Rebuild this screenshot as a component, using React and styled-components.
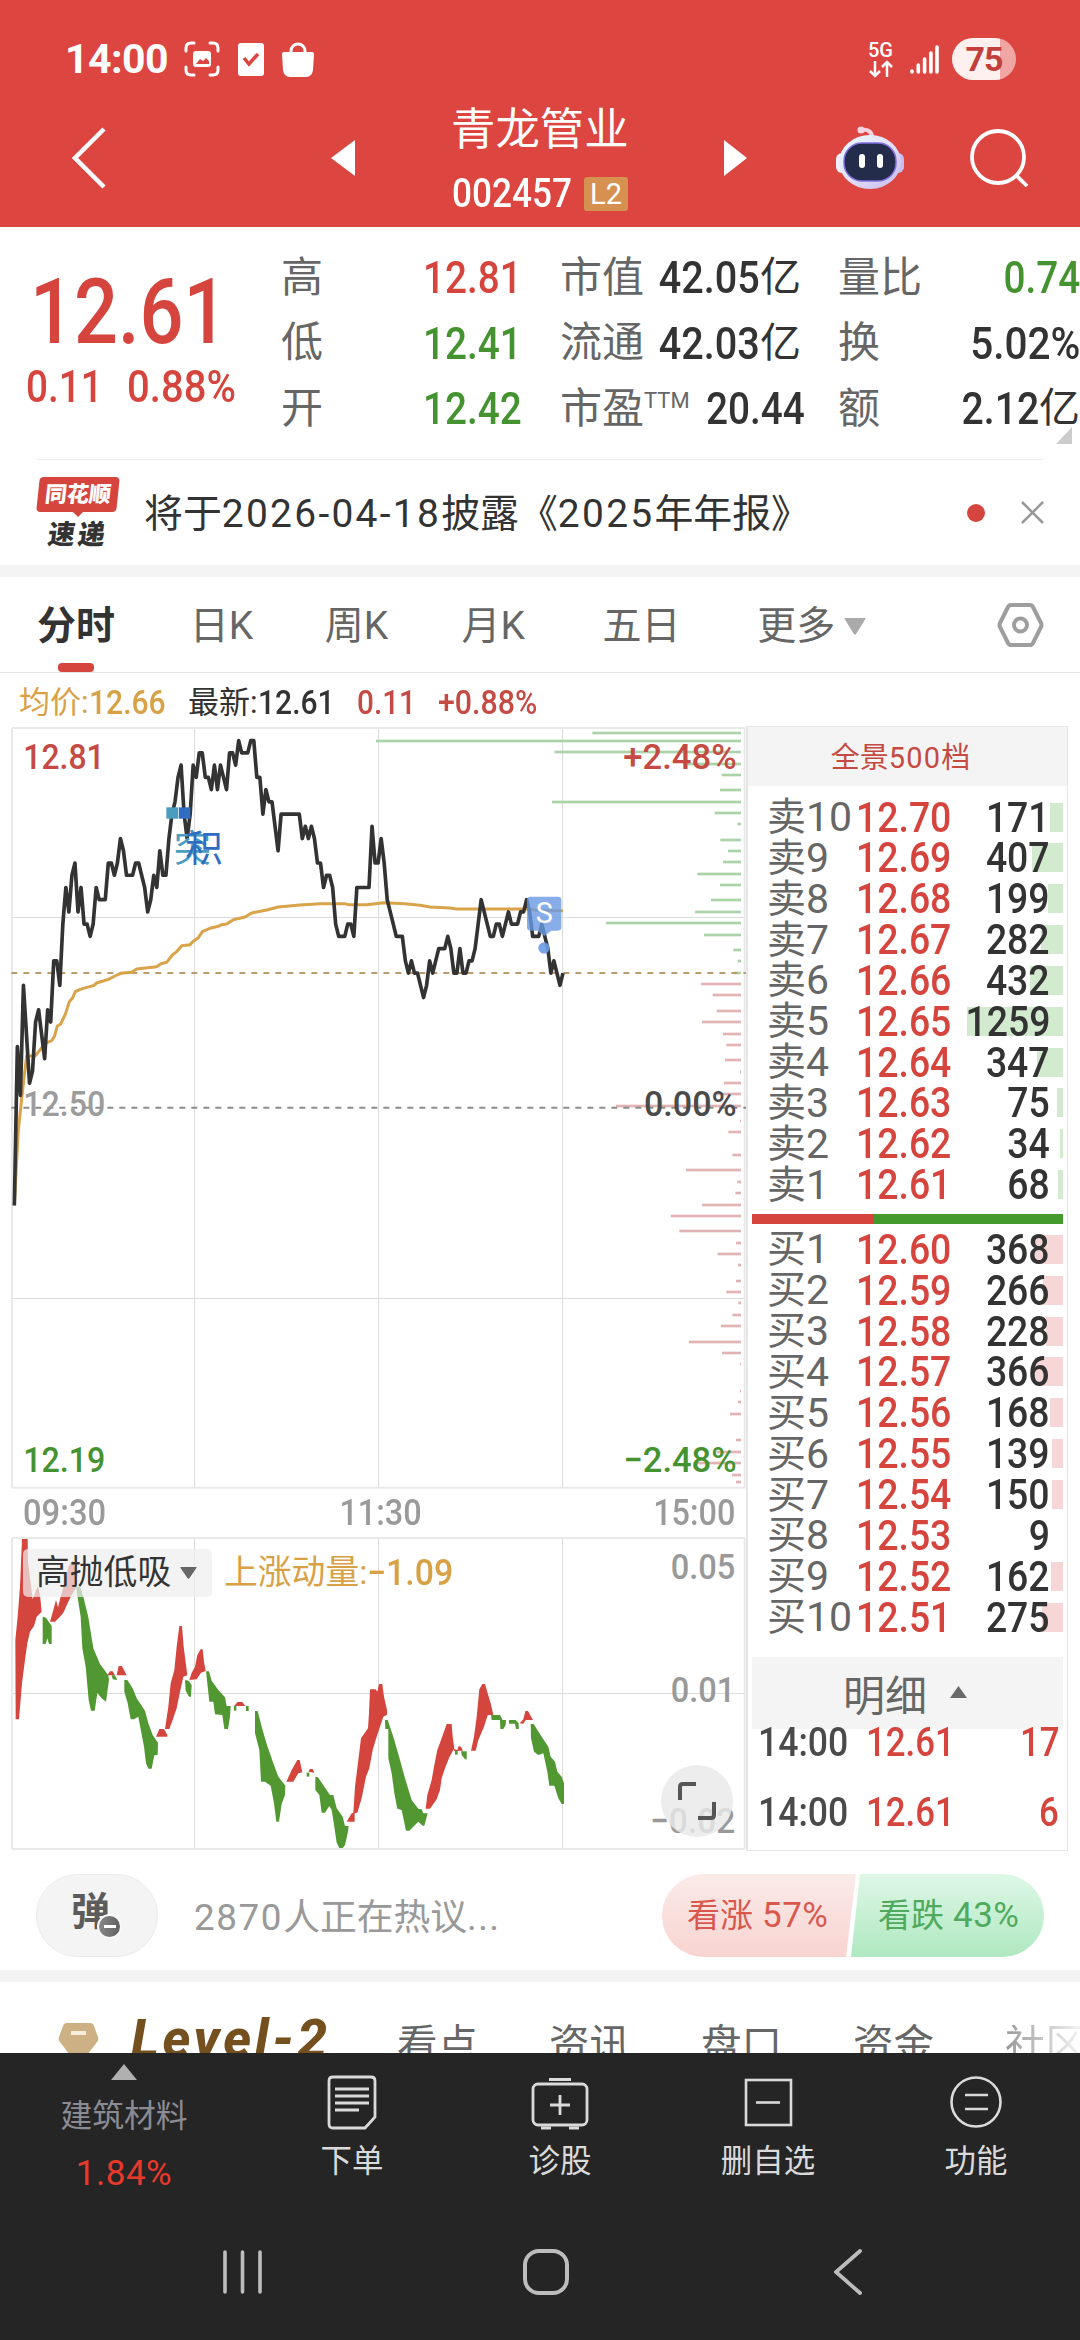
import React from 'react';
import styled, { createGlobalStyle } from 'styled-components';

const red = '#d5453e';
const green = '#459330';
const gold = '#d9a146';
const dark = '#333333';
const grey = '#666666';

const Global = createGlobalStyle`
* {
    box-sizing: border-box;
}
body {
    margin: 0;
    background: #ffffff;
    font-family: Roboto, 'Noto Sans CJK SC', sans-serif;
    line-height: 1;
    color: #333333;
}
svg {
    display: block;
    flex: none;
}
`;
const Screen = styled.div`
width: 1080px;
height: 2340px;
overflow: hidden;
display: flex;
flex-direction: column;
white-space: nowrap;
`;
/* narrow digits, close to the DIN face used for prices */
const Num = styled.span`
display: inline-block;
font-weight: 500;
font-size: ${p => p.$size || 42}px;
color: ${p => p.$color || dark};
transform: scaleX(${p => p.$k || 0.87});
transform-origin: ${p => p.$from || 'left'} center;
`;
const Head = styled.header`
height: 227px;
background: #dd4540;
color: #ffffff;
`;
const StatusBar = styled.div`
height: 98px;
padding: 20px 64px 0 65px;
display: flex;
align-items: center;
`;
const Clock = styled.div`
width: 119px;
font-size: 41px;
font-weight: 700;
letter-spacing: -0.5px;
`;
const StatusIcons = styled.div`
display: flex;
align-items: center;
gap: 18px;
flex: 1;
`;
const Network = styled.div`
width: 27px;
margin-right: 16px;
display: flex;
flex-direction: column;
align-items: center;
font-size: 20px;
font-weight: 500;
`;
const Battery = styled.div`
width: 64px;
height: 42px;
margin-left: 13px;
border-radius: 21px;
background: linear-gradient(90deg, #fdf0ef 48px, #f0a6a3 48px);
color: #c2403b;
font-size: 34px;
font-weight: 700;
display: flex;
align-items: center;
justify-content: center;
letter-spacing: -1px;
`;
const TitleBar = styled.div`
height: 120px;
padding-left: 72px;
display: flex;
align-items: center;
`;
const Title = styled.div`
width: 177px;
margin: 0 96px;
padding-top: 3px;
display: flex;
flex-direction: column;
gap: 25px;
`;
const StockName = styled.div`
font-size: 44.4px;
`;
const Code = styled.div`
display: flex;
align-items: center;
justify-content: space-between;
height: 34px;
`;
const CodeNum = styled.div`
width: 120px;
padding-left: 1px;
`;
const Badge = styled.div`
width: 44px;
height: 34px;
border-radius: 3px;
background: #d6904f;
font-size: 29px;
display: flex;
align-items: center;
justify-content: center;
`;
const Space = styled.div`
width: ${p => p.$w}px;
flex: none;
`;
const Quote = styled.section`
height: 232px;
padding-top: 18px;
display: grid;
grid-template-columns: 281px 241px 38px 241px 37px 242px;
position: relative;
`;
const Price = styled.div`
padding: 23px 0 0 26px;
`;
const Big = styled.div`
padding-left: 4px;
height: 96px;
`;
const Change = styled.div`
display: flex;
`;
const ChangeItem = styled.div`
width: 101px;
`;
const Facts = styled.div`
display: flex;
flex-direction: column;
`;
const Fact = styled.div`
height: 65.5px;
display: flex;
align-items: center;
justify-content: space-between;
font-size: 42px;
color: ${grey};
`;
const Sup = styled.sup`
font-size: 22px;
line-height: 1;
vertical-align: 15px;
`;
const Value = styled.span`
color: ${p => p.$color || dark};
display: flex;
align-items: center;
font-size: 41px;
`;
const Corner = styled.div`
position: absolute;
right: 8px;
bottom: 15px;
border-left: 16px solid transparent;
border-bottom: 17px solid #cccccc;
`;
const News = styled.section`
height: 106px;
margin: 0 36px;
border-top: 1px solid #ececec;
display: flex;
align-items: center;
`;
const Brand = styled.div`
width: 84px;
margin-right: 24px;
display: flex;
flex-direction: column;
align-items: center;
font-weight: 900;
`;
const BrandTop = styled.div`
width: 80px;
height: 35px;
border-radius: 4px;
background: ${red};
color: #ffffff;
font-size: 22px;
transform: skewX(-6deg);
display: flex;
align-items: center;
justify-content: center;
`;
const BrandTail = styled.div`
border: 5px solid transparent;
border-top-color: ${red};
height: 6px;
`;
const BrandBottom = styled.div`
font-size: 27px;
letter-spacing: 3px;
transform: skewX(-8deg);
`;
const NewsText = styled.div`
flex: 1;
padding-top: 3px;
font-size: 38.9px;
`;
const Wide = styled.span`
letter-spacing: ${p => p.$s}px;
`;
const Dot = styled.div`
width: 18px;
height: 18px;
border-radius: 50%;
background: ${red};
margin-right: 36px;
`;
const Band = styled.div`
height: 12px;
background: #f4f4f4;
`;
const Tabs = styled.nav`
height: 96px;
border-bottom: 1px solid #e4e4e4;
padding: 0 36px 0 37px;
display: flex;
align-items: center;
`;
const Tab = styled.div`
width: ${p => p.$w}px;
height: 95px;
padding-top: 4px;
display: flex;
align-items: center;
font-size: 39px;
font-weight: ${p => (p.$on ? 600 : 400)};
color: ${p => (p.$on ? dark : grey)};
position: relative;
&::after {
    content: '';
    display: ${p => (p.$on ? 'block' : 'none')};
    position: absolute;
    left: 21px;
    bottom: 0;
    width: 36px;
    height: 9px;
    border-radius: 4px;
    background: ${red};
}
`;
const More = styled.div`
width: 240px;
padding-top: 3px;
display: flex;
align-items: center;
gap: 9px;
font-size: 39px;
color: ${grey};
`;
const Summary = styled.div`
height: 53px;
padding: 6px 0 0 19px;
display: flex;
align-items: center;
font-size: 31px;
`;
const SummaryItem = styled.div`
width: ${p => p.$w}px;
color: ${p => p.$color};
display: flex;
align-items: center;
`;
const Main = styled.main`
height: 1124px;
display: flex;
`;
const Charts = styled.div`
width: 746px;
display: flex;
flex-direction: column;
`;
const Times = styled.div`
height: 48px;
padding: 0 11px 0 23px;
display: flex;
align-items: center;
justify-content: space-between;
`;
const SubChart = styled.div`
position: relative;
height: 313px;
`;
const Legend = styled.div`
position: absolute;
left: 23px;
top: 12px;
height: 48px;
display: flex;
align-items: center;
font-size: 33.8px;
color: ${gold};
`;
const Picker = styled.div`
width: 189px;
height: 48px;
margin-right: 12px;
padding-left: 13px;
border-radius: 5px;
background: rgba(238, 238, 238, 0.72);
color: ${dark};
display: flex;
align-items: center;
gap: 9px;
`;
const Expand = styled.div`
position: absolute;
left: 661px;
top: 228px;
width: 72px;
height: 72px;
border-radius: 50%;
background: rgba(233, 233, 233, 0.82);
display: flex;
align-items: center;
justify-content: center;
`;
const Book = styled.div`
width: 322px;
height: 1125px;
border: 1px solid #e6e6e6;
border-left-width: 2px;
`;
const BookHead = styled.div`
height: 59px;
margin-bottom: 10.5px;
padding: 3px 14px 0 0;
background: #f4f4f4;
color: #c44a42;
font-size: 29px;
display: flex;
align-items: center;
justify-content: center;
`;
const Level = styled.div`
height: 40.85px;
padding: 0 17px 0 19px;
display: grid;
grid-template-columns: 89px 80px 1fr;
align-items: center;
position: relative;
font-size: 39px;
color: ${grey};
`;
const LevelTag = styled.span`
display: flex;
align-items: center;
`;
const Digits = styled.span`
font-size: 41px;
`;
const Bar = styled.div`
position: absolute;
right: 4px;
top: 6px;
height: 29px;
background: ${p => (p.$sell ? '#d2ebcf' : '#f6d6d6')};
`;
const Over = styled.span`
position: relative;
text-align: right;
`;
const Ratio = styled.div`
height: 10px;
margin: 9px 4px 5px;
background: linear-gradient(90deg, ${red} 122px, #459a2c 122px);
`;
const DetailHead = styled.div`
height: 72px;
margin: 20px 4px 0;
padding: 8px 5px 0 0;
background: #f4f4f4;
color: ${grey};
font-size: 42px;
display: flex;
align-items: center;
justify-content: center;
gap: 23px;
svg {
    margin-bottom: 11px;
}
`;
const Tick = styled.div`
height: 30px;
margin-bottom: 40px;
padding: 0 8px 0 10px;
display: grid;
grid-template-columns: 108px 1fr auto;
align-items: center;
position: relative;
top: -6px;
`;
const Talk = styled.section`
height: 120px;
padding: 11px 36px 0;
display: flex;
align-items: center;
`;
const Bullet = styled.div`
width: 122px;
height: 83px;
border: 1px solid #ebebeb;
border-radius: 42px;
background: #f4f4f4;
color: #5c5c5c;
font-size: 39px;
font-weight: 700;
padding: 18px 0 0 34px;
position: relative;
`;
const BulletBadge = styled.div`
position: absolute;
left: 60px;
top: 39px;
width: 25px;
height: 25px;
border: 2px solid #f8f8f8;
border-radius: 50%;
background: linear-gradient(90deg, #888888, #5f5f5f);
display: flex;
align-items: center;
justify-content: center;
&::after {
    content: '';
    width: 12px;
    height: 3px;
    background: #ffffff;
}
`;
const TalkText = styled.div`
flex: 1;
padding: 5px 0 0 36px;
font-size: 36.8px;
color: #999999;
`;
const Votes = styled.div`
width: 382px;
height: 83px;
border-radius: 42px;
overflow: hidden;
display: flex;
`;
const Vote = styled.div`
width: ${p => (p.$up ? 194 : 193)}px;
height: 83px;
padding-left: ${p => (p.$up ? 25 : 27)}px;
margin-right: ${p => (p.$up ? -5 : 0)}px;
display: flex;
align-items: center;
gap: 9px;
font-size: 33px;
color: ${p => (p.$up ? '#d9584e' : '#4faa5e')};
background: ${p => (p.$up ? 'linear-gradient(#faebe9, #f8d4d0)' : 'linear-gradient(#def7e7, #afe8c0)')};
clip-path: ${p => (p.$up ? 'polygon(0 0, 100% 0, 184px 100%, 0 100%)' : 'polygon(9px 0, 100% 0, 100% 100%, 0 100%)')};
span {
    font-size: 35px;
    letter-spacing: 0.5px;
}
`;
const LevelBar = styled.section`
height: 71px;
padding-left: 58px;
overflow: hidden;
display: flex;
align-items: flex-start;
`;
const LevelLogo = styled.div`
width: 266px;
flex: none;
margin: 31px 0 0 32px;
font-size: 53px;
font-style: italic;
font-weight: 800;
letter-spacing: 3.6px;
color: #74501f;
`;
const LevelTab = styled.div`
width: 152px;
margin-top: 43px;
flex: none;
font-size: 40.5px;
color: ${grey};
${p => p.$fade && `
    width: 90px;
    background: linear-gradient(90deg, #999999, #f2f2f2 74px);
    background-clip: text;
    color: transparent;
`}
`;
const Bottom = styled.footer`
height: 287px;
background: #252525;
display: flex;
flex-direction: column;
`;
const Actions = styled.div`
height: 147px;
display: grid;
grid-template-columns: 248px repeat(4, 208px);
`;
const Industry = styled.div`
padding-top: 11px;
display: flex;
flex-direction: column;
align-items: center;
font-size: 31.8px;
color: #8b8b93;
`;
const Up = styled.div`
border: 13px solid transparent;
border-top: 0;
border-bottom: 16px solid #b0b0b0;
margin-bottom: 21px;
`;
const Pct = styled.div`
margin-top: 23px;
font-size: 35px;
color: #e8392b;
letter-spacing: 0.5px;
`;
const Action = styled.div`
padding-top: 18px;
display: flex;
flex-direction: column;
align-items: center;
gap: 15px;
font-size: 31.5px;
color: #dadada;
`;
const SystemNav = styled.div`
padding: 49px 218px 0 223px;
display: flex;
svg + svg {
    margin-left: 260px;
}
svg:last-child {
    margin-left: auto;
}
`;

/* one price per minute, in cents over 12.50 */
const prices = [
    -8, 5, 1, 10, 6, 2, 3, 7, 8, 6, 4, 8, 7, 12, 12, 10, 15, 18, 16, 19,
    20, 16, 18, 15, 15, 14, 15, 18, 17, 17, 17, 20, 20, 19, 20, 22, 21, 19, 19, 19,
    20, 20, 19, 18, 16, 17, 19, 18, 21, 19, 19, 22, 24, 25, 27, 28, 24, 22, 24, 28,
    27, 29, 29, 27, 27, 26, 28, 26, 28, 27, 26, 29, 29, 28, 30, 29, 29, 29, 30, 30,
    27, 27, 24, 26, 25, 25, 23, 21, 24, 24, 24, 24, 24, 24, 24, 22, 23, 22, 23, 22,
    20, 20, 18, 19, 19, 18, 15, 14, 14, 14, 15, 15, 14, 18, 18, 18, 18, 18, 23, 20,
    20, 22, 20, 17, 16, 15, 14, 14, 14, 12, 11, 12, 11, 11, 10, 9, 10, 12, 11, 12,
    13, 13, 13, 14, 13, 11, 11, 13, 11, 11, 12, 12, 13, 15, 17, 16, 15, 14, 14, 15,
    15, 14, 15, 16, 15, 15, 15, 16, 16, 17, 16, 14, 14, 14, 15, 14, 13, 11, 12, 11,
    10, 11,
];
const priceLine = prices.map((c, i) => `${(43 + i * 9.094).toFixed(1)},${(1163 - c * 36.7).toFixed(1)}`).join(' ');
const averageLine = '43,1456 55,1230 70,1090 80,1008 105,1008 120,990 135,970 155,962 163,950 172,918 182,912 197,880 208,845 217,835 226,815 240,808 282,796 290,789 325,778 345,768 362,760 395,757 410,747 470,740 483,731 500,727 517,705 530,695 545,677 570,674 582,662 595,653 608,634 630,625 655,619 665,614 680,612 700,599 735,591 755,579 800,570 835,561 900,555 960,551 1035,551 1045,554 1100,554 1152,548 1215,551 1260,556 1290,561 1350,564 1370,567 1590,567 1620,572 1689,572';

const greenBars = [[667, 39], [18, 63], [553, 96], [940, 132], [1055, 165], [1050, 210], [546, 246], [1034, 279], [1102, 312], [1051, 360], [1074, 393], [1059, 426], [982, 462], [1050, 495], [1023, 540], [975, 576], [708, 609], [1002, 645], [1090, 690], [1103, 723], [1092, 759]];
const redBars = [[993, 792], [1028, 825], [1040, 873], [996, 906], [1059, 942], [1069, 975], [1065, 1020], [1110, 1056], [1062, 1089], [1040, 1122], [738, 1158], [1110, 1203], [1075, 1236], [1087, 1305], [948, 1350], [1102, 1386], [1096, 1419], [996, 1455], [902, 1488], [928, 1533], [1098, 1569], [1043, 1602], [1104, 1635], [1098, 1683], [1069, 1716], [1105, 1749], [1087, 1785], [1053, 1818], [957, 1866], [1056, 1899], [1110, 1932], [1110, 2013], [1104, 2046], [1080, 2082], [1098, 2160], [1040, 2196], [982, 2229], [1086, 2265], [1098, 2286]];

const rises = [
    '66,57 83,57 84,125 98,238 113,198 120,225 125,275 110,290 102,318 90,335 82,370 75,420 66,490 57,598 47,598 46,360 53,290 60,200',
    '150,305 160,270 168,240 174,262 182,230 195,185 205,140 220,120 230,200 215,225 205,245 190,278 180,290 165,305',
    '322,466 330,454 338,454 345,466',
    '350,466 356,438 366,438 380,466',
    '468,650 478,627 492,627 502,645 502,650',
    '495,627 505,560 512,490 523,450 530,380 538,318 546,318 551,380 562,466 550,470 540,515 530,565 518,600 508,627',
    '568,480 575,458 585,440 592,405 602,388 608,388 612,425 617,453 603,458 590,478',
    '703,558 712,546 727,546 736,558',
    '859,785 875,750 892,720 899,720 907,757 895,760 880,785',
    '925,755 930,747 938,747 943,758',
    '1040,905 1055,880 1060,878 1065,800 1075,720 1083,655 1104,625 1107,580 1110,508 1127,508 1132,515 1137,492 1147,492 1152,530 1161,570 1161,584 1150,590 1130,650 1118,690 1108,745 1098,770 1085,835 1072,878 1064,880 1064,905',
    '1277,866 1282,825 1295,780 1302,740 1312,690 1325,655 1340,612 1355,612 1358,650 1363,685 1348,712 1335,745 1325,775 1320,810 1310,838 1290,866',
    '1360,686 1372,690 1376,678 1383,680 1389,692 1363,693',
    '1413,692 1422,650 1430,590 1438,508 1447,492 1455,492 1463,520 1472,550 1480,584 1463,586 1452,620 1435,660 1427,692',
    '1559,610 1570,598 1576,573 1584,573 1599,600 1577,600 1570,611',
];
const falls = [
    '128,290 138,293 155,318 155,372 147,372 142,355 137,372 128,372',
    '228,200 240,200 250,230 265,292 280,385 300,432 325,466 327,480 318,545 305,535 292,519 284,572 273,572 266,540 257,440 247,385 242,290',
    '335,466 345,466 352,480 338,478',
    '373,480 382,480 398,505 410,535 435,572 445,610 458,645 474,668 473,705 463,706 455,746 445,746 438,730 432,680 415,590 402,598 392,598 383,550 373,515',
    '555,480 566,482 575,495 573,530 567,530 557,512',
    '618,454 627,454 635,482 655,510 675,532 680,558 692,558 690,590 684,627 673,627 667,585 645,583 640,545 628,545',
    '702,558 709,558 709,572 702,572',
    '738,558 746,558 746,573 738,573',
    '765,573 773,573 785,620 800,672 820,730 835,770 856,797 855,825 845,852 837,905 829,905 822,850 812,797 795,785 783,785 778,690 765,640',
    '920,758 928,758 928,770 920,770',
    '946,770 954,772 990,825 1000,825 1010,865 1028,890 1035,918 1046,918 1043,940 1035,975 1028,984 1018,984 1010,968 1003,920 995,870 988,858 975,878 965,878 958,825 946,810',
    '1155,600 1163,600 1180,650 1200,720 1215,775 1235,840 1255,866 1265,868 1270,880 1283,880 1273,917 1268,917 1255,905 1245,915 1228,932 1218,932 1205,870 1192,866 1183,820 1175,760 1165,715 1165,627 1156,627',
    '1365,692 1373,692 1373,704 1365,704',
    '1383,694 1400,694 1400,718 1395,718 1385,705',
    '1473,585 1500,585 1508,600 1518,600 1517,615 1510,627 1501,627 1500,600 1475,600',
    '1527,600 1547,600 1556,610 1556,627 1548,627 1545,611 1527,611',
    '1592,612 1601,612 1625,650 1645,680 1652,710 1665,725 1672,755 1685,770 1692,790 1692,852 1685,852 1675,835 1663,797 1648,797 1642,755 1630,700 1615,705 1602,695 1593,655',
];

const sells = [[10, '12.70', 171], [9, '12.69', 407], [8, '12.68', 199], [7, '12.67', 282], [6, '12.66', 432], [5, '12.65', 1259], [4, '12.64', 347], [3, '12.63', 75], [2, '12.62', 34], [1, '12.61', 68]];
const buys = [[1, '12.60', 368], [2, '12.59', 266], [3, '12.58', 228], [4, '12.57', 366], [5, '12.56', 168], [6, '12.55', 139], [7, '12.54', 150], [8, '12.53', 9], [9, '12.52', 162], [10, '12.51', 275]];

const DownArrow = ({ w, h, color }) => (
    <svg width={w} height={h} viewBox="0 0 20 16" preserveAspectRatio="none">
        <path d="M1 0h18q1 0 .5 1L11 15q-1 1-2 0L.5 1Q0 0 1 0z" fill={color} />
    </svg>
);

const Robot = () => (
    <svg width="70" height="66" viewBox="0 0 70 66">
        <defs>
            <linearGradient id="shell" x1="0" y1="0" x2="1" y2="1">
                <stop offset="0" stopColor="#e9fbff" />
                <stop offset=".5" stopColor="#e4e0f8" />
                <stop offset="1" stopColor="#c4b9ee" />
            </linearGradient>
        </defs>
        <path d="M37 12c0-5-4-8-10-7" fill="none" stroke="#f6d3df" strokeWidth="4" strokeLinecap="round" />
        <circle cx="26" cy="5" r="3.6" fill="#f6d3df" />
        <rect x="1" y="28" width="12" height="20" rx="6" fill="#f4eefb" />
        <rect x="57" y="28" width="12" height="20" rx="6" fill="#c9bdf0" />
        <ellipse cx="35" cy="37" rx="31" ry="27" fill="url(#shell)" />
        <rect x="9" y="18" width="52" height="38" rx="18" fill="#232c4b" stroke="#7f6fe0" strokeWidth="1.5" />
        <rect x="24" y="29" width="6" height="14" rx="3" fill="#fff" />
        <rect x="42" y="29" width="6" height="14" rx="3" fill="#fff" />
    </svg>
);

const PriceChart = () => (
    <svg width="746" height="763" viewBox="0 18 2238 2289" fontFamily="Roboto" fontWeight="500" fontSize="107">
        <g stroke="#dcdcdc" strokeWidth="3">
            <path d="M583.500 24V2302M1135.500 24V2302M1687.500 24V2302M36 592.500H2235M36 1735.500H2235" />
            <path d="M36 24H2235M36 24V2303M36 2303H2235M2234 24V2303" stroke="#e9e9e9" strokeWidth="6" />
        </g>
        {greenBars.map(([x, y]) => (
            <rect key={y} x={x + 1110} y={y - 4} width={1113 - x} height="8" fill="#abd3a8" />
        ))}
        {redBars.map(([x, y]) => (
            <rect key={y} x={x + 1110} y={y - 4} width={1113 - x} height="8" fill="#e2b3b3" />
        ))}
        <path d="M34 759H2238" stroke="#b99c70" strokeWidth="6" strokeDasharray="18 18" />
        <path d="M34 1163.500H2238" stroke="#8c8c8c" strokeWidth="6" strokeDasharray="18 18" />
        <polyline points={averageLine} fill="none" stroke="#d9a34a" strokeWidth="9" strokeLinejoin="round" />
        <polyline points={priceLine} fill="none" stroke="#333" strokeWidth="11" strokeLinejoin="round" />
        <rect x="499" y="262" width="36" height="34" fill="#4a9dbf" />
        <rect x="537" y="262" width="34" height="34" fill="#2f6cc2" />
        <g fontFamily="Noto Sans CJK SC" fontWeight="400" fontSize="112">
            <text x="521" y="426" fill="#4a9dbf">突</text>
            <text x="556" y="426" fill="#2f6cc2">积</text>
        </g>
        <g fill="#6a9ae5">
            <path d="M1591 530h83q10 0 10 10v82q0 10-10 10h-20l-21 16-21-16h-21q-10 0-10-10v-82q0-10 10-10z" opacity=".8" />
            <circle cx="1632" cy="684" r="17" opacity=".9" />
        </g>
        <text x="1633" y="610" fill="#fff" fontSize="86" fontWeight="400" textAnchor="middle">S</text>
        <text x="70" y="147" fill="#c44a43" textLength="244" lengthAdjust="spacingAndGlyphs">12.81</text>
        <text x="70" y="1187" fill="#9c9c9c" textLength="246" lengthAdjust="spacingAndGlyphs">12.50</text>
        <text x="70" y="2256" fill={green} textLength="246" lengthAdjust="spacingAndGlyphs">12.19</text>
        <text x="1870" y="147" fill="#c44a43" textLength="340" lengthAdjust="spacingAndGlyphs">+2.48%</text>
        <text x="1932" y="1187" fill="#4a4a4a" textLength="278" lengthAdjust="spacingAndGlyphs">0.00%</text>
        <text x="1870" y="2256" fill={green} textLength="340" lengthAdjust="spacingAndGlyphs">−2.48%</text>
    </svg>
);

const MomentumChart = () => (
    <svg width="746" height="313" viewBox="0 51 2238 939" fontFamily="Roboto" fontWeight="500" fontSize="107">
        <g stroke="#dcdcdc" strokeWidth="3">
            <path d="M583.500 54V987M1135.500 54V987M1687.500 54V987M36 520.500H2235" />
            <path d="M36 54H2235M36 54V987M36 987H2235M2234 54V987" stroke="#e9e9e9" strokeWidth="6" />
        </g>
        {rises.map(p => <polygon key={p} points={p} fill="#d4453d" />)}
        {falls.map(p => <polygon key={p} points={p} fill="#529832" />)}
        <g fill="#999">
            <text x="2012" y="178" textLength="194" lengthAdjust="spacingAndGlyphs">0.05</text>
            <text x="2012" y="546" textLength="194" lengthAdjust="spacingAndGlyphs">0.01</text>
            <text x="1950" y="938" textLength="256" lengthAdjust="spacingAndGlyphs">−0.02</text>
        </g>
    </svg>
);

const Levels = ({ name, rows, sell }) => rows.map(([n, price, volume]) => (
    <Level key={n}>
        <Bar $sell={sell} style={{ width: volume > 20 ? Math.round(volume / 13.1) : 0 }} />
        <LevelTag>{name}<Digits>{n}</Digits></LevelTag>
        <Num $color={red} $k={0.89}>{price}</Num>
        <Over><Num $from="right" $k={0.89}>{volume}</Num></Over>
    </Level>
));

export default function App() {
    return (
        <Screen>
            <Global />
            <Head>
                <StatusBar>
                    <Clock>14:00</Clock>
                    <StatusIcons>
                        <svg width="36" height="36" viewBox="0 0 36 36" fill="none" stroke="#fff" strokeWidth="3" strokeLinecap="round">
                            <path d="M2 10V7q0-5 5-5h3M26 2h3q5 0 5 5v3M34 26v3q0 5-5 5h-3M10 34H7q-5 0-5-5v-3" />
                            <rect x="9" y="10" width="18" height="16" rx="3" fill="#fff" stroke="none" />
                            <path d="M12 23l4-5 3 2 3-3 3 3v3z" fill="#dd4540" stroke="none" />
                        </svg>
                        <svg width="26" height="33" viewBox="0 0 26 33">
                            <rect width="26" height="33" rx="3" fill="#fff" />
                            <path d="M6 15l5 6 9-10" fill="none" stroke="#dd4540" strokeWidth="3.500" />
                        </svg>
                        <svg width="32" height="35" viewBox="0 0 32 35">
                            <path d="M9 12V9a7 7 0 0114 0v3" fill="none" stroke="#fff" strokeWidth="3" />
                            <path d="M2 10h28q2 0 2 2l-1 16q-1 7-7 7H8q-6 0-7-7L0 12q0-2 2-2z" fill="#fff" />
                        </svg>
                    </StatusIcons>
                    <Network>
                        5G
                        <svg width="26" height="18" viewBox="0 0 26 18" fill="none" stroke="#fff" strokeWidth="2.500">
                            <path d="M7 1v15M2 11l5 5 5-5M19 17V2M14 7l5-5 5 5" />
                        </svg>
                    </Network>
                    <svg width="29" height="30" viewBox="0 0 29 30" stroke="#fff" strokeWidth="3.600" strokeLinecap="round">
                        <path d="M2 28V27M8.300 28V21M14.600 28V15M20.900 28V9M27 28V3" />
                    </svg>
                    <Battery>75</Battery>
                </StatusBar>
                <TitleBar>
                    <svg width="34" height="62" viewBox="0 0 34 62" fill="none" stroke="#fff" strokeWidth="4.500">
                        <path d="M32 2L3 31l29 29" />
                    </svg>
                    <Space $w={225} />
                    <svg width="24" height="36" viewBox="0 0 24 36"><path d="M24 0v36L0 18z" fill="#fff" /></svg>
                    <Title>
                        <StockName>青龙管业</StockName>
                        <Code>
                            <CodeNum><Num $size={40} $k={0.88} $color="#fff">002457</Num></CodeNum>
                            <Badge>L2</Badge>
                        </Code>
                    </Title>
                    <svg width="23" height="36" viewBox="0 0 23 36"><path d="M0 0v36l23-18z" fill="#fff" /></svg>
                    <Space $w={88} />
                    <Robot />
                    <Space $w={65} />
                    <svg width="59" height="58" viewBox="0 0 59 58" fill="none" stroke="#fff" strokeWidth="3.800">
                        <circle cx="28" cy="28" r="26" />
                        <path d="M46 46l11 11" />
                    </svg>
                </TitleBar>
            </Head>

            <Quote>
                <Price>
                    <Big><Num $size={90} $k={0.86} $color={red}>12.61</Num></Big>
                    <Change>
                        <ChangeItem><Num $size={45} $k={0.86} $color={red}>0.11</Num></ChangeItem>
                        <ChangeItem><Num $size={45} $k={0.89} $color={red}>0.88%</Num></ChangeItem>
                    </Change>
                </Price>
                <Facts>
                    <Fact>高<Num $size={45} $k={0.86} $from="right" $color={red}>12.81</Num></Fact>
                    <Fact>低<Num $size={45} $k={0.86} $from="right" $color={green}>12.41</Num></Fact>
                    <Fact>开<Num $size={45} $k={0.86} $from="right" $color={green}>12.42</Num></Fact>
                </Facts>
                <div />
                <Facts>
                    <Fact>市值<Value><Num $size={45} $k={0.88} $from="right">42.05</Num>亿</Value></Fact>
                    <Fact>流通<Value><Num $size={45} $k={0.88} $from="right">42.03</Num>亿</Value></Fact>
                    <Fact><span>市盈<Sup>TTM</Sup></span><Num $size={45} $k={0.86} $from="right">20.44</Num></Fact>
                </Facts>
                <div />
                <Facts>
                    <Fact>量比<Num $size={45} $k={0.86} $from="right" $color={green}>0.74</Num></Fact>
                    <Fact>换<Num $size={45} $k={0.9} $from="right">5.02%</Num></Fact>
                    <Fact>额<Value><Num $size={45} $k={0.87} $from="right">2.12</Num>亿</Value></Fact>
                </Facts>
                <Corner />
            </Quote>

            <News>
                <Brand>
                    <BrandTop>同花顺</BrandTop>
                    <BrandTail />
                    <BrandBottom>速递</BrandBottom>
                </Brand>
                <NewsText>将于<Wide $s={2.3}>2026-04-18</Wide>披露《<Wide $s={2.3}>2025</Wide>年年报》</NewsText>
                <Dot />
                <svg width="23" height="23" viewBox="0 0 23 23" stroke="#999" strokeWidth="2.500">
                    <path d="M1 1l21 21M22 1L1 22" />
                </svg>
            </News>
            <Band />

            <Tabs>
                <Tab $on $w={153}>分时</Tab>
                <Tab $w={135}>日K</Tab>
                <Tab $w={137}>周K</Tab>
                <Tab $w={141}>月K</Tab>
                <Tab $w={155}>五日</Tab>
                <More>更多<DownArrow w={22} h={17} color="#aaaaaa" /></More>
                <svg width="47" height="44" viewBox="0 0 47 44" fill="none" stroke="#9e9e9e" strokeWidth="4">
                    <path d="M14 2h19q2 0 3 2l8 16q1 2 0 4l-8 16q-1 2-3 2H14q-2 0-3-2L3 24q-1-2 0-4l8-16q1-2 3-2z" />
                    <circle cx="23.500" cy="22" r="6.500" />
                </svg>
            </Tabs>
            <Summary>
                <SummaryItem $w={169} $color={gold}>均价:<Num $size={33} $k={0.91} $color={gold}>12.66</Num></SummaryItem>
                <SummaryItem $w={169} $color={dark}>最新:<Num $size={33} $k={0.91}>12.61</Num></SummaryItem>
                <SummaryItem $w={81}><Num $size={33} $k={0.9} $color="#c44a43">0.11</Num></SummaryItem>
                <Num $size={33} $k={0.92} $color="#c44a43">+0.88%</Num>
            </Summary>

            <Main>
                <Charts>
                    <PriceChart />
                    <Times>
                        <Num $size={36} $color="#9a9a9a" $k={0.91}>09:30</Num>
                        <Num $size={36} $color="#9a9a9a" $k={0.9} $from="70%">11:30</Num>
                        <Num $size={36} $color="#9a9a9a" $k={0.9} $from="right">15:00</Num>
                    </Times>
                    <SubChart>
                        <MomentumChart />
                        <Legend>
                            <Picker>高抛低吸<DownArrow w={17} h={12} color="#666666" /></Picker>
                            上涨动量:<Num $size={36} $k={0.94} $color={gold}>−1.09</Num>
                        </Legend>
                        <Expand>
                            <svg width="38" height="38" viewBox="0 0 38 38" fill="none" stroke="#555" strokeWidth="4">
                                <path d="M2 18V5q0-3 3-3h13M36 20v13q0 3-3 3H20" />
                            </svg>
                        </Expand>
                    </SubChart>
                </Charts>
                <Book>
                    <BookHead>全景<Wide $s={1.2}>500</Wide>档</BookHead>
                    <Levels name="卖" rows={sells} sell />
                    <Ratio />
                    <Levels name="买" rows={buys} />
                    <DetailHead>
                        明细
                        <svg width="17" height="12" viewBox="0 0 17 12"><path d="M8.500 0L17 12H0z" fill="#6a6a6a" /></svg>
                    </DetailHead>
                    <Tick>
                        <Num $size={40} $k={0.89} $color="#4a4a4a">14:00</Num>
                        <Num $size={40} $k={0.87} $color={red}>12.61</Num>
                        <Num $size={40} $k={0.87} $from="right" $color={red}>17</Num>
                    </Tick>
                    <Tick>
                        <Num $size={40} $k={0.89} $color="#4a4a4a">14:00</Num>
                        <Num $size={40} $k={0.87} $color={red}>12.61</Num>
                        <Num $size={40} $k={0.87} $from="right" $color={red}>6</Num>
                    </Tick>
                </Book>
            </Main>

            <Talk>
                <Bullet>弹<BulletBadge /></Bullet>
                <TalkText><Wide $s={1.6}>2870</Wide>人正在热议<Wide $s={1.4}>...</Wide></TalkText>
                <Votes>
                    <Vote $up>看涨<span>57%</span></Vote>
                    <Vote>看跌<span>43%</span></Vote>
                </Votes>
            </Talk>
            <Band />
            <LevelBar>
                <svg width="41" height="82" viewBox="0 0 41 82">
                    <path d="M9 41h23q3 0 4 3l4 11q1 3-1 5L23 81h-5L2 60q-2-2-1-5l4-11q1-3 4-3z" fill="#cdb083" />
                    <rect x="13" y="49" width="15" height="4" fill="#f6ecd8" />
                </svg>
                <LevelLogo>Level-2</LevelLogo>
                <LevelTab>看点</LevelTab>
                <LevelTab>资讯</LevelTab>
                <LevelTab>盘口</LevelTab>
                <LevelTab>资金</LevelTab>
                <LevelTab $fade>社区</LevelTab>
            </LevelBar>

            <Bottom>
                <Actions>
                    <Industry>
                        <Up />
                        建筑材料
                        <Pct>1.84%</Pct>
                    </Industry>
                    <Action>
                        <svg width="58" height="60" viewBox="0 0 58 60" fill="none" stroke="#dadada" strokeWidth="2.800">
                            <path d="M10 6h38q4 0 4 4v36L42 57H10q-4 0-4-4V10q0-4 4-4z" />
                            <path d="M12 18h34M12 25h34M12 32h34M12 39h24" />
                        </svg>
                        下单
                    </Action>
                    <Action>
                        <svg width="58" height="60" viewBox="0 0 58 60" fill="none" stroke="#dadada" strokeWidth="2.800">
                            <rect x="2" y="13" width="54" height="41" rx="5" />
                            <path d="M18 8.500h22M10 57h10M38 57h10M29 24v20M19 34h20" />
                        </svg>
                        诊股
                    </Action>
                    <Action>
                        <svg width="58" height="60" viewBox="0 0 58 60" fill="none" stroke="#dadada" strokeWidth="2.600">
                            <rect x="7" y="9" width="45" height="45" />
                            <path d="M17 31.500h24" />
                        </svg>
                        删自选
                    </Action>
                    <Action>
                        <svg width="58" height="60" viewBox="0 0 58 60" fill="none" stroke="#dadada" strokeWidth="2.600">
                            <circle cx="29" cy="31" r="24.500" />
                            <path d="M18 24h23M18 38h23" />
                        </svg>
                        功能
                    </Action>
                </Actions>
                <SystemNav>
                    <svg width="40" height="46" viewBox="0 0 40 46" stroke="#bdbdbd" strokeWidth="3.600" strokeLinecap="round">
                        <path d="M2 3v40M19.500 3v40M37 3v40" />
                    </svg>
                    <svg width="46" height="46" viewBox="0 0 46 46" fill="none" stroke="#bdbdbd" strokeWidth="4">
                        <rect x="2" y="2" width="42" height="42" rx="14" />
                    </svg>
                    <svg width="28" height="46" viewBox="0 0 28 46" fill="none" stroke="#bdbdbd" strokeWidth="3.800" strokeLinecap="round">
                        <path d="M26 2L2 23l24 21" />
                    </svg>
                </SystemNav>
            </Bottom>
        </Screen>
    );
}
